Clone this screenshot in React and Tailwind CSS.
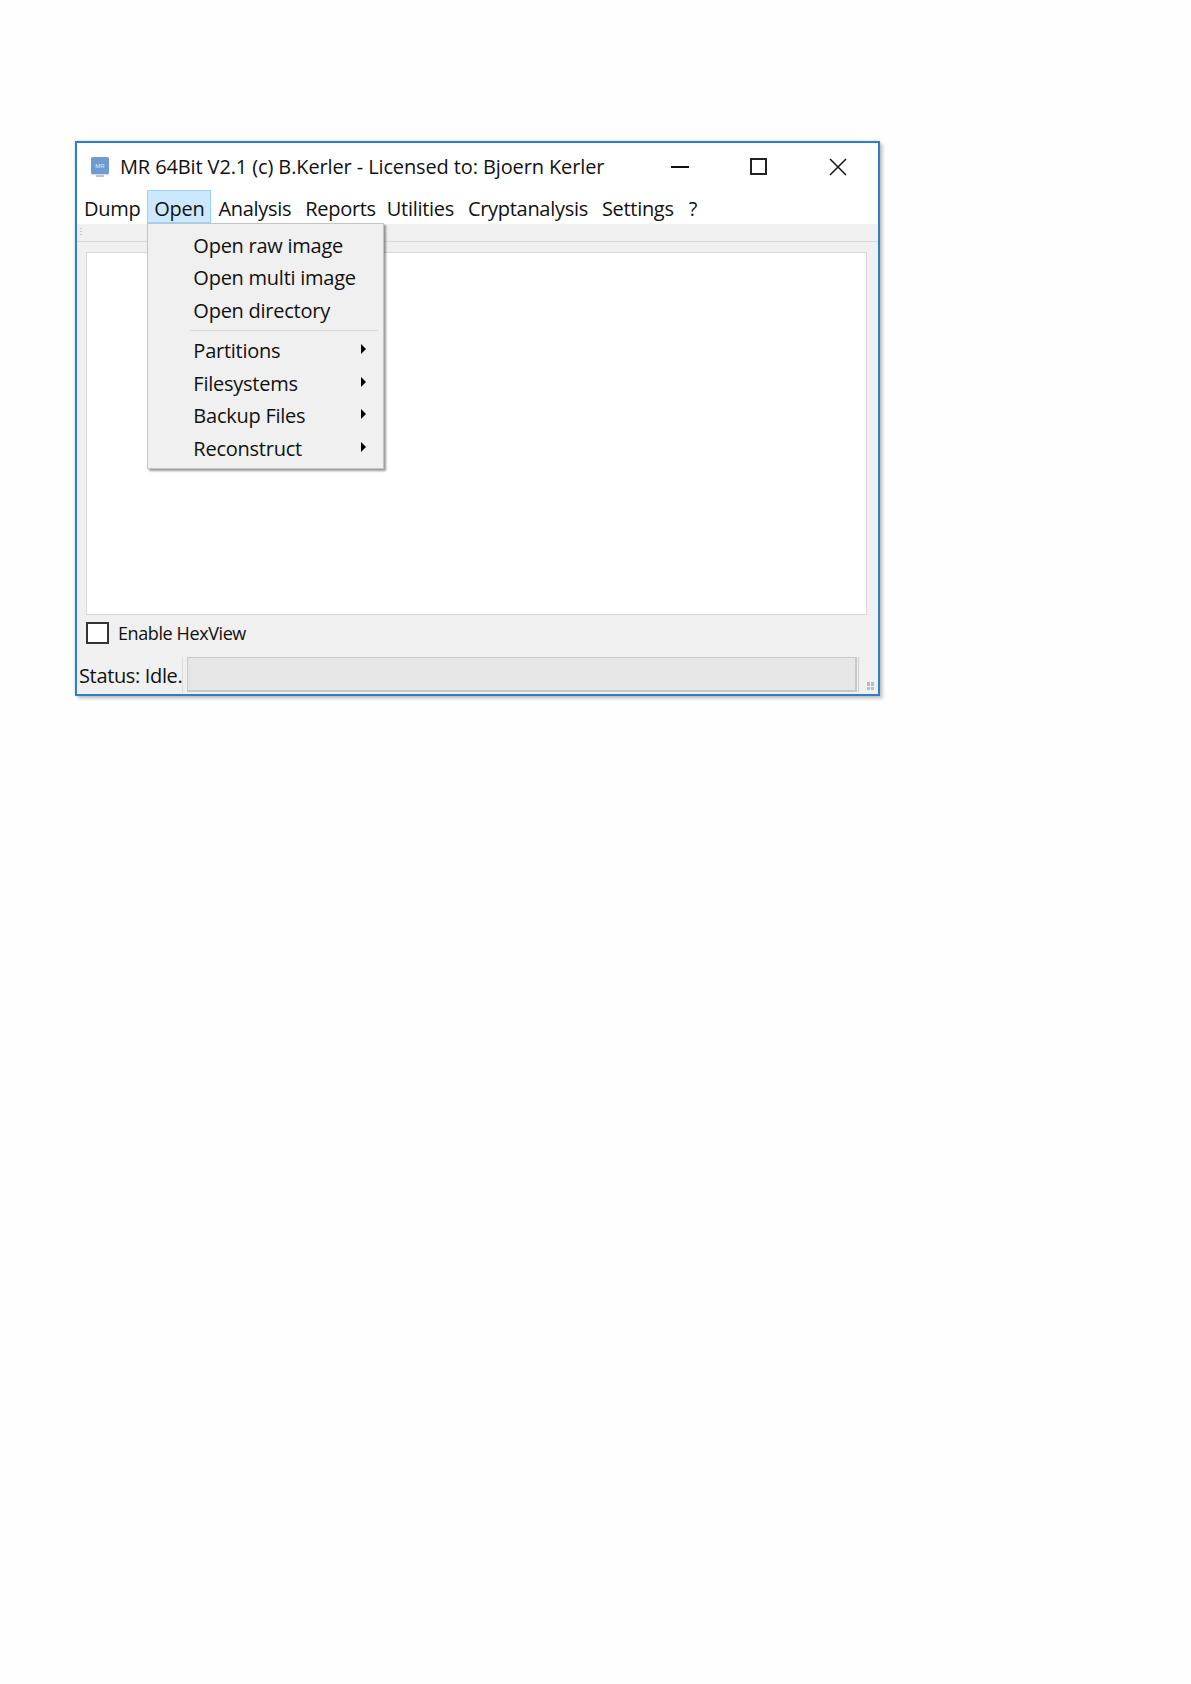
const menus = [
  { label: 'Dump', cls: 'px-[7px]' },
  { label: 'Open', cls: 'relative px-[6px] leading-[36px] bg-[#cce8ff] border border-[#99d1ff]' },
  { label: 'Analysis', cls: 'px-[7px]' },
  { label: 'Reports', cls: 'px-[7px]' },
  { label: 'Utilities', cls: 'px-[7px] -ml-[3px]' },
  { label: 'Cryptanalysis', cls: 'px-[7px]' },
  { label: 'Settings', cls: 'px-[7px]' },
  { label: '?', cls: 'px-[7px] ml-[1px]' },
];
const openItems = ['Open raw image', 'Open multi image', 'Open directory'];
const subItems = ['Partitions', 'Filesystems', 'Backup Files', 'Reconstruct'];

function AppIcon() {
  return (
    <svg width="20" height="22" viewBox="0 0 20 22" className="shrink-0">
      <rect x="1" y="1" width="18" height="17" rx="1.5" fill="#6f9bd1" />
      <rect x="6" y="18" width="8" height="3" fill="#b9c4d0" />
      <rect x="1" y="18" width="18" height="1" fill="#d5dbe2" />
      <text x="10" y="12" fontSize="6" textAnchor="middle" fill="#dfe9f5" fontFamily="Liberation Sans, sans-serif">MR</text>
    </svg>
  );
}

function OpenMenu() {
  return (
    <div className="absolute left-[-1px] top-[32px] z-10 w-[237px] h-[246px] bg-[#f0f0f0] border border-[#c4c4c4] shadow-[2px_2px_2px_rgba(0,0,0,0.4)] pt-[6px] text-[20px] text-[#111] tracking-[-0.25px]">
      {openItems.map((item) => (
        <div key={item} className="h-[32.4px] leading-[32px] pl-[45px]">{item}</div>
      ))}
      <div className="ml-[42px] mr-[5px] mt-[3px] mb-[4px] h-px bg-[#d6d6d6]" />
      {subItems.map((item) => (
        <div key={item} className="relative h-[32.5px] leading-[32px] pl-[45px]">
          {item}
          <span className="absolute left-[213px] top-[9px] w-0 h-0 border-y-[5px] border-y-transparent border-l-[5px] border-l-black" />
        </div>
      ))}
    </div>
  );
}

export default function App() {
  return (
    <div className="min-h-[1684px] bg-[#fefefe] pl-[75px] pt-[141px] font-['Open_Sans','Noto_Sans',sans-serif] text-black">
      <div className="w-[805px] h-[555px] border-2 border-[#2f7fc8] shadow-[3px_3px_3px_rgba(0,0,0,0.18),0_0_3px_rgba(0,0,0,0.2)] bg-[#f0f0f0] flex flex-col">
        {/* Title bar */}
        <div className="h-[47px] bg-white flex items-center pl-[13px] shrink-0">
          <AppIcon />
          <span className="ml-[10px] text-[20px] text-[#111] whitespace-nowrap w-[498px] tracking-[-0.12px]">MR 64Bit V2.1 (c) B.Kerler - Licensed to: Bjoern Kerler</span>
          <svg width="18" height="2" viewBox="0 0 18 2" className="ml-[53px]">
            <rect width="18" height="2" fill="#111" />
          </svg>
          <div className="ml-[61px] w-[17px] h-[17px] border-2 border-[#222]" />
          <svg width="18" height="18" viewBox="0 0 18 18" className="ml-[62px]" fill="none" stroke="#111" strokeWidth="1.5">
            <path d="M1 1l16 16M17 1L1 17" />
          </svg>
        </div>
        {/* Menu bar */}
        <div className="h-[34px] bg-white flex shrink-0 text-[20px] leading-[38px] text-[#111] tracking-[-0.3px]">
          {menus.map((m) => (
            <div key={m.label} className={`h-[33px] ${m.cls}`}>
              {m.label}
              {m.label === 'Open' && <OpenMenu />}
            </div>
          ))}
        </div>
        {/* Toolbar */}
        <div className="h-[18px] bg-[#f0f0f0] border-b border-[#d9d9d9] shrink-0 flex items-center pl-[3px]">
          <div className="w-[2px] h-[9px] bg-[repeating-linear-gradient(to_bottom,#c8c8c8_0_1px,transparent_1px_3px)]" />
        </div>
        {/* Text area */}
        <div className="ml-[9px] mr-[11px] mt-[10px] h-[363px] shrink-0 bg-white border border-[#d8d8d8]" />
        {/* Checkbox row */}
        <div className="flex items-center ml-[9px] mt-[7px] h-[22px] shrink-0">
          <div className="w-[23px] h-[22px] border-2 border-[#333] bg-white shrink-0" />
          <span className="ml-[9px] text-[18px] tracking-[-0.4px] text-[#111]">Enable HexView</span>
        </div>
        {/* Status bar */}
        <div className="flex h-[36px] mt-[13px] shrink-0">
          <span className="ml-[2px] w-[103px] text-[20px] leading-[38px] text-[#111] whitespace-nowrap tracking-[-0.35px]">Status: Idle.</span>
          <div className="w-px bg-[#dcdcdc]" />
          <div className="ml-[4px] w-[670px] h-[35px] bg-[#e6e6e6] border border-[#c8c8c8] border-b-2 border-r-2" />
          <div className="ml-[1px] w-px h-[35px] bg-[#d0d0d0]" />
          <div className="ml-[8px] mt-[25px] grid grid-cols-2 gap-[1px] w-[7px] h-[8px]">
            <span className="bg-[#bdbdbd]" />
            <span className="bg-[#bdbdbd]" />
            <span className="bg-[#bdbdbd]" />
            <span className="bg-[#bdbdbd]" />
          </div>
        </div>
      </div>
    </div>
  );
}
